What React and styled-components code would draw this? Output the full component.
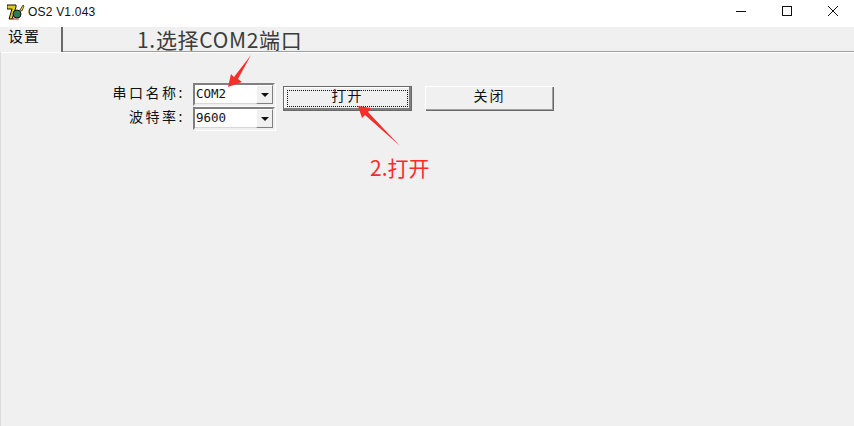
import React from "react";
import styled, { createGlobalStyle } from "styled-components";

const Global = createGlobalStyle`
  html, body { margin: 0; padding: 0; background: #f0f0f0; }
  body { width: 854px; height: 426px; overflow: hidden; font-family: "Noto Sans CJK SC", "Liberation Sans", sans-serif; }
`;
const Win = styled.div`
  position: relative;
  width: 854px;
  height: 426px;
  display: flex;
  flex-direction: column;
  background: #f0f0f0;
  overflow: hidden;
`;
const TitleBar = styled.header`
  height: 27px;
  background: #fff;
  display: flex;
  align-items: center;
  padding-left: 7px;
  flex: none;
`;
const TitleText = styled.span`
  margin-left: 3px;
  font: 12px "Liberation Sans", sans-serif;
  letter-spacing: 0.2px;
  color: #111;
  position: relative;
  top: -2px;
`;
const AppIconBox = styled.svg`
  position: relative;
  top: -2px;
  flex: none;
`;
const Controls = styled.div`
  margin-left: auto;
  margin-right: -2px;
  display: flex;
  height: 100%;
`;
const Ctl = styled.div`
  width: 46px;
  height: 22px;
  display: flex;
  align-items: center;
  justify-content: center;
`;
const TabStrip = styled.div`
  height: 24px;
  display: flex;
  flex: none;
  border-bottom: 1px solid #a0a0a0;
  box-shadow: 0 1px 0 #fff;
`;
const Tab = styled.div`
  width: 63px;
  height: 25px;
  box-sizing: border-box;
  border-right: 2px solid #696969;
  background: #f0f0f0;
  padding: 0 0 0 8px;
  font: 15px/17px "Noto Sans CJK SC", sans-serif;
  letter-spacing: 1px;
  color: #111;
  position: relative;
  z-index: 1;
`;
const Body = styled.main`
  flex: 1;
  border-left: 1px solid #dcdcdc;
  padding: 31px 0 0 0;
  display: flex;
  align-items: flex-start;
`;
const Form = styled.div`
  display: grid;
  grid-template-columns: 192px 82px;
  row-gap: 1px;
`;
const Label = styled.label`
  text-align: right;
  padding-right: 8px;
  font: 14px/19px "Noto Sans CJK SC", sans-serif;
  letter-spacing: 2.5px;
  color: #111;
`;
const Combo = styled.div`
  width: 82px;
  height: 23px;
  box-sizing: border-box;
  background: #fff;
  border: 2px solid;
  border-color: #808080 #f0f0f0 #f0f0f0 #808080;
  box-shadow: inset -1px -1px 0 #d8d8d8, 1px 1px 0 #fff;
  display: flex;
  align-items: center;
  position: relative;
`;
const ComboText = styled.span`
  padding-left: 1px;
  margin-top: -2px;
  font: 12.5px "DejaVu Sans Mono", "Liberation Mono", monospace;
  color: #111;
`;
const ComboBtn = styled.div`
  margin-left: auto;
  width: 17px;
  height: 19px;
  box-sizing: border-box;
  background: #f0f0f0;
  border-left: 1px solid #fff;
  border-top: 1px solid #fff;
  border-right: 1px solid #808080;
  border-bottom: 1px solid #808080;
  display: flex;
  align-items: center;
  justify-content: center;
  &::after {
    content: "";
    border: 4px solid transparent;
    border-top: 4px solid #111;
    border-bottom: 0;
  }
`;
const Buttons = styled.div`
  display: flex;
  gap: 13px;
  margin-left: 8px;
  margin-top: 3px;
`;
const Btn = styled.button`
  width: 129px;
  height: 25px;
  box-sizing: border-box;
  background: #f0f0f0;
  border: 0;
  padding: 0 0 7px;
  font: 14px "Noto Sans CJK SC", sans-serif;
  letter-spacing: 2px;
  color: #111;
  display: flex;
  align-items: center;
  justify-content: center;
  position: relative;
  box-shadow: ${(p) =>
    p.$focused
      ? "inset 0 0 0 1px #696969, inset -1px -1px 0 2px #808080, inset 1px 1px 0 1px #fff"
      : "inset 1px 1px 0 #fff, inset -1px -1px 0 #696969, inset -2px -2px 0 #a0a0a0"};
`;
const FocusRing = styled.span`
  position: absolute;
  inset: 4px;
  border: 1px dotted #111;
`;
const Note = styled.div`
  position: absolute;
  left: ${(p) => p.$x}px;
  top: ${(p) => p.$y}px;
  font: 21px/28px "Noto Sans CJK SC", sans-serif;
  letter-spacing: ${(p) => p.$ls || 0}px;
  color: ${(p) => p.$c};
  white-space: nowrap;
  z-index: 2;
`;
const Arrow = styled.svg`
  position: absolute;
  left: ${(p) => p.$x}px;
  top: ${(p) => p.$y}px;
  z-index: 3;
  overflow: visible;
`;

const AppIcon = () => (
  <AppIconBox width="18" height="16" viewBox="0 0 18 16">
    <path d="M0 1h9v2L5 15H2l3-10H0z" fill="#e6c820" stroke="#111" strokeWidth="1" />
    <circle cx="10" cy="10" r="4" fill="#2e7d4f" stroke="#111" />
    <path d="M13 6l3-5 1 1-2 5z" fill="#f2d820" stroke="#111" strokeWidth=".7" />
    <path d="M7 14l-2 1h7" stroke="#b03020" fill="none" />
  </AppIconBox>
);

export default function App() {
  return (
    <Win>
      <Global />
      <TitleBar>
        <AppIcon />
        <TitleText>OS2 V1.043</TitleText>
        <Controls>
          <Ctl>
            <svg width="10" height="10" viewBox="0 0 10 10"><path d="M0 5.5h10" stroke="#111" /></svg>
          </Ctl>
          <Ctl>
            <svg width="10" height="10" viewBox="0 0 10 10"><rect x=".5" y=".5" width="9" height="9" fill="none" stroke="#111" /></svg>
          </Ctl>
          <Ctl>
            <svg width="10" height="10" viewBox="0 0 10 10"><path d="M0 0l10 10M10 0L0 10" stroke="#111" /></svg>
          </Ctl>
        </Controls>
      </TitleBar>
      <TabStrip>
        <Tab>设置</Tab>
      </TabStrip>
      <Body>
        <Form>
          <Label>串口名称:</Label>
          <Combo>
            <ComboText>COM2</ComboText>
            <ComboBtn />
          </Combo>
          <Label>波特率:</Label>
          <Combo>
            <ComboText>9600</ComboText>
            <ComboBtn />
          </Combo>
        </Form>
        <Buttons>
          <Btn $focused>
            <FocusRing />
            打开
          </Btn>
          <Btn>关闭</Btn>
        </Buttons>
      </Body>
      <Note $x={137} $y={25} $c="#3c3c3c" $ls={0.7}>1.选择COM2端口</Note>
      <Note $x={370} $y={153} $c="#ff2a2a">2.打开</Note>
      <Arrow $x={225} $y={55} width="30" height="33" viewBox="0 0 30 33">
        <path d="M3 32L6 19 9 22 26 0 13 24 17 27z" fill="#f5302a" />
      </Arrow>
      <Arrow $x={355} $y={103} width="46" height="44" viewBox="0 0 46 44">
        <path d="M3 3L16 5 13 9 45 43 10 12 7 15z" fill="#f5302a" />
      </Arrow>
    </Win>
  );
}
